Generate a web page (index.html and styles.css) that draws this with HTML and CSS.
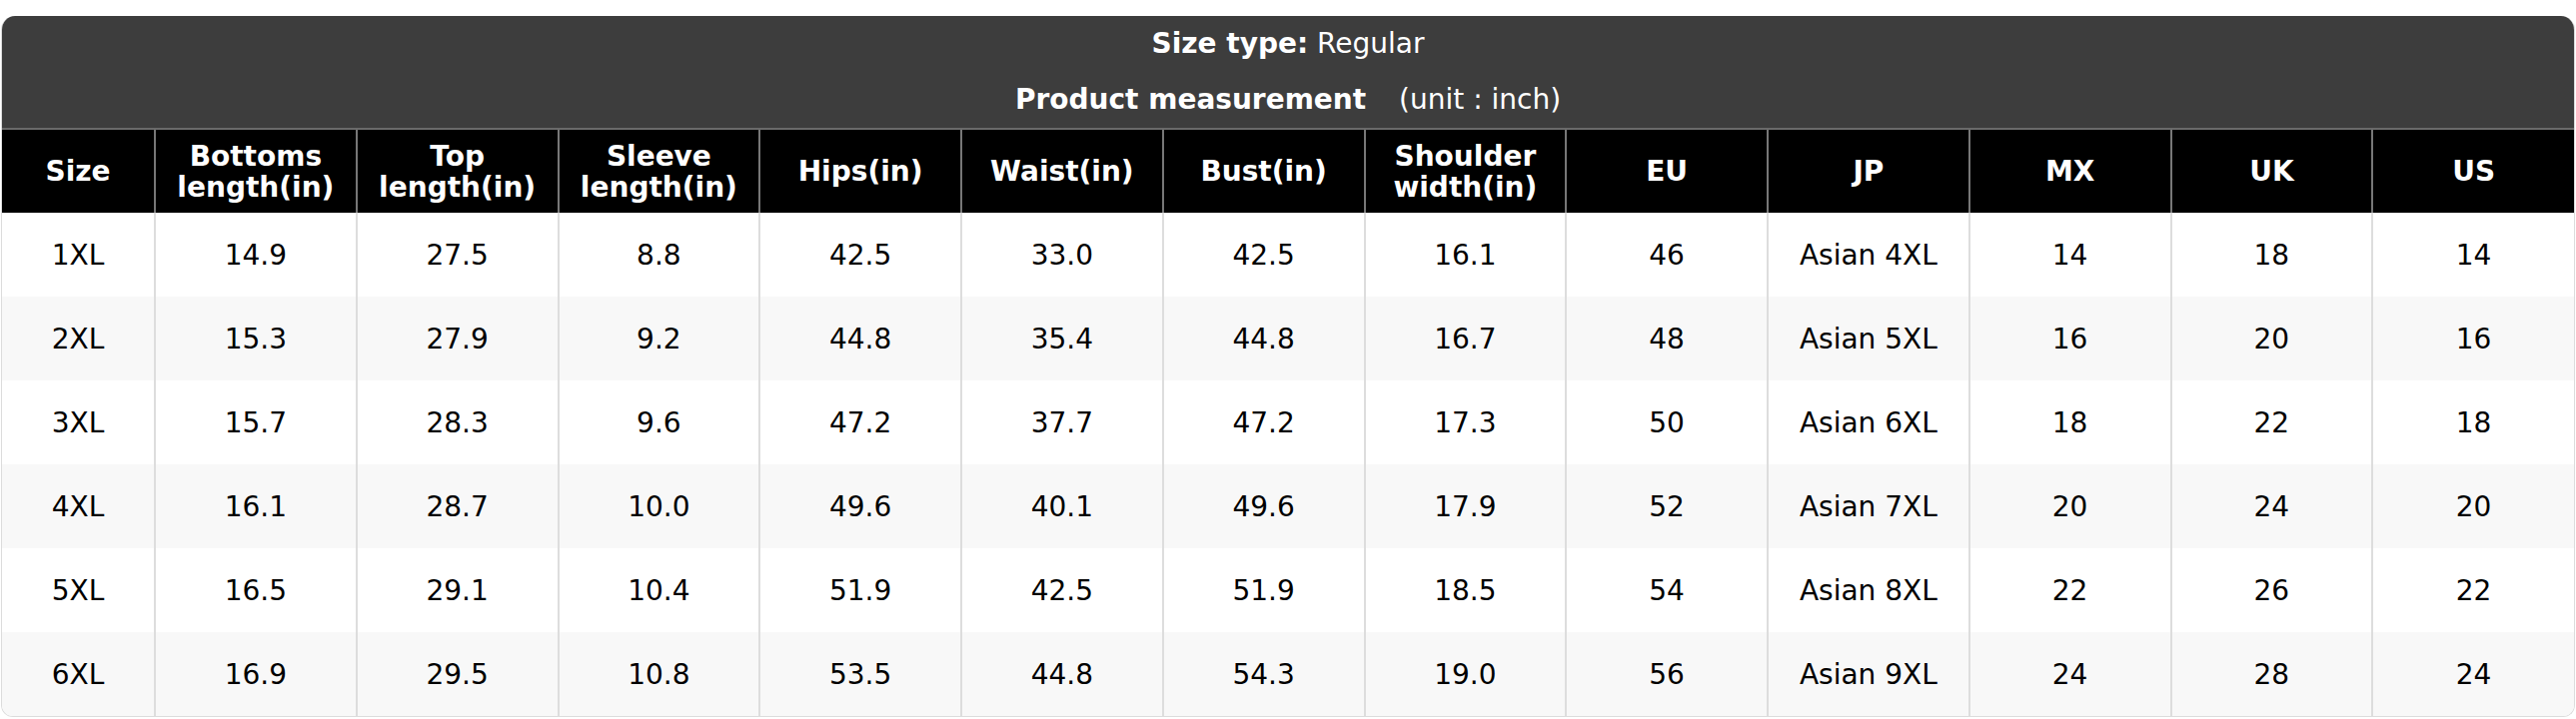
FILE: index.html
```html
<!DOCTYPE html>
<html lang="en">
<head>
<meta charset="utf-8">
<title>Size chart</title>
<link rel="stylesheet" href="styles.css">
</head>
<body>
<div class="chart">
  <div class="chart-title">
    <div class="title-line"><b>Size type:</b> Regular</div>
    <div class="title-line"><b>Product measurement</b> <span class="unit">(unit : inch)</span></div>
  </div>
  <table class="size-table">
    <colgroup>
      <col class="col-size">
      <col span="12">
    </colgroup>
    <thead>
      <tr>
        <th>Size</th>
        <th>Bottoms<br>length(in)</th>
        <th>Top<br>length(in)</th>
        <th>Sleeve<br>length(in)</th>
        <th>Hips(in)</th>
        <th>Waist(in)</th>
        <th>Bust(in)</th>
        <th>Shoulder<br>width(in)</th>
        <th>EU</th>
        <th>JP</th>
        <th>MX</th>
        <th>UK</th>
        <th>US</th>
      </tr>
    </thead>
    <tbody>
      <tr><td>1XL</td><td>14.9</td><td>27.5</td><td>8.8</td><td>42.5</td><td>33.0</td><td>42.5</td><td>16.1</td><td>46</td><td>Asian 4XL</td><td>14</td><td>18</td><td>14</td></tr>
      <tr><td>2XL</td><td>15.3</td><td>27.9</td><td>9.2</td><td>44.8</td><td>35.4</td><td>44.8</td><td>16.7</td><td>48</td><td>Asian 5XL</td><td>16</td><td>20</td><td>16</td></tr>
      <tr><td>3XL</td><td>15.7</td><td>28.3</td><td>9.6</td><td>47.2</td><td>37.7</td><td>47.2</td><td>17.3</td><td>50</td><td>Asian 6XL</td><td>18</td><td>22</td><td>18</td></tr>
      <tr><td>4XL</td><td>16.1</td><td>28.7</td><td>10.0</td><td>49.6</td><td>40.1</td><td>49.6</td><td>17.9</td><td>52</td><td>Asian 7XL</td><td>20</td><td>24</td><td>20</td></tr>
      <tr><td>5XL</td><td>16.5</td><td>29.1</td><td>10.4</td><td>51.9</td><td>42.5</td><td>51.9</td><td>18.5</td><td>54</td><td>Asian 8XL</td><td>22</td><td>26</td><td>22</td></tr>
      <tr><td>6XL</td><td>16.9</td><td>29.5</td><td>10.8</td><td>53.5</td><td>44.8</td><td>54.3</td><td>19.0</td><td>56</td><td>Asian 9XL</td><td>24</td><td>28</td><td>24</td></tr>
    </tbody>
  </table>
</div>
</body>
</html>
```
FILE: styles.css
```css
html, body {
  margin: 0;
  padding: 0;
  background: #ffffff;
}

body {
  font-family: "DejaVu Sans", Verdana, sans-serif;
  font-size: 28px;
  color: #000000;
}

.chart {
  margin: 16px 1px 0 1px;
  border: 1px solid #dcdcdc;
  border-top: none;
  border-radius: 14px 14px 12px 12px;
  overflow: hidden;
}

.chart-title {
  background: #3d3d3d;
  color: #ffffff;
  text-align: center;
}

.title-line {
  height: 56px;
  line-height: 56px;
  white-space: nowrap;
}

.title-line b {
  font-weight: bold;
}

.unit {
  margin-left: 24px;
}

.size-table {
  width: 100%;
  table-layout: fixed;
  border-collapse: collapse;
}

.col-size {
  width: 153px;
}

.size-table th {
  background: #000000;
  color: #ffffff;
  font-weight: bold;
  height: 84px;
  padding: 0 4px;
  line-height: 31px;
  text-align: center;
  vertical-align: middle;
  border-top: 2px solid #6a6a6a;
  border-left: 2px solid #777777;
  box-sizing: border-box;
}

.size-table td {
  height: 84px;
  padding: 0 4px;
  text-align: center;
  vertical-align: middle;
  border-left: 2px solid #dddddd;
  box-sizing: border-box;
}

.size-table th:first-child,
.size-table td:first-child {
  border-left: none;
}

.size-table tbody tr:nth-child(odd) td {
  background: #ffffff;
}

.size-table tbody tr:nth-child(even) td {
  background: #f8f8f8;
}
```
